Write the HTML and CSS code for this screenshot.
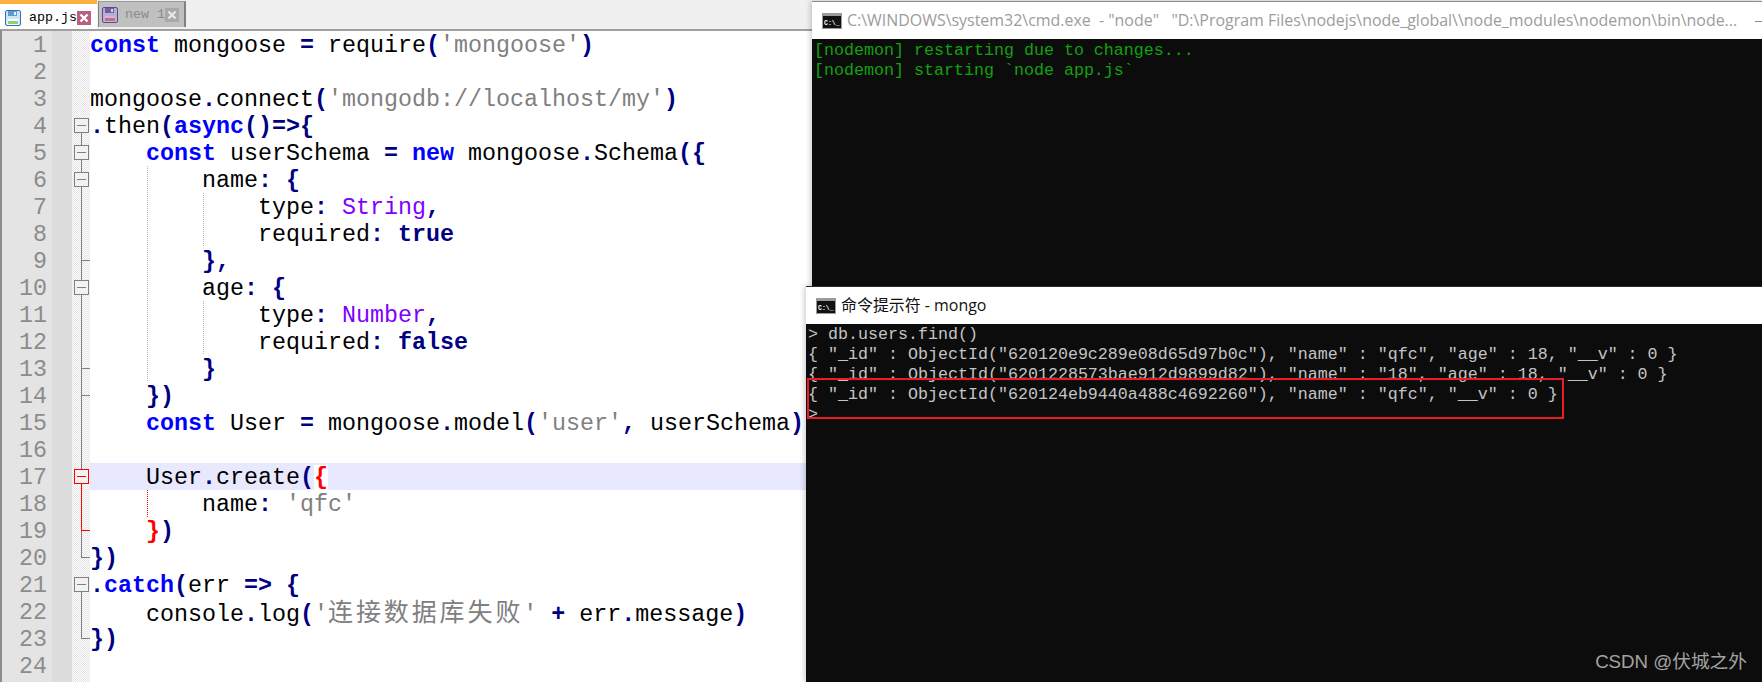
FILE: index.html
```html
<!DOCTYPE html>
<html lang="en">
<head>
<meta charset="utf-8">
<title>Editor and consoles</title>
<link rel="stylesheet" href="styles.css">
</head>
<body>
<main class="desktop">
  <section class="editor">
    <nav class="tabs">
      <div class="tab tab-active">
        <svg class="disk" viewBox="0 0 16 16" width="16" height="16"><rect x=".5" y=".5" width="15" height="15" rx="1.5" fill="#cfe3f7" stroke="#2f74b8"/><rect x="3" y="1" width="9" height="5" fill="#5d9bd8"/><rect x="9" y="2" width="2" height="3" fill="#eaf4ff"/><rect x="2.5" y="9" width="11" height="6" fill="#fff"/><rect x="3" y="11" width="10" height="3" fill="#8fd16f"/></svg>
        <span class="tab-label">app.js</span>
        <svg class="close" viewBox="0 0 14 14" width="14" height="14"><rect width="14" height="14" fill="#b9607e"/><path d="M3.5 3.5l7 7M10.500 3.500l-7 7" stroke="#fff" stroke-width="2.400"/></svg>
      </div>
      <div class="tab tab-idle">
        <svg class="disk" viewBox="0 0 16 16" width="16" height="16"><rect x=".5" y=".5" width="15" height="15" rx="1.5" fill="#b7b0cf" stroke="#5a4a8c"/><rect x="3" y="1" width="9" height="5" fill="#6f5fa0"/><rect x="9" y="2" width="2" height="3" fill="#d8d4e6"/><rect x="2.5" y="9" width="11" height="6" fill="#d8b4c4"/><rect x="3" y="11" width="10" height="3" fill="#b0729a"/></svg>
        <span class="tab-label">new 1</span>
        <svg class="close" viewBox="0 0 14 14" width="14" height="14"><rect width="14" height="14" fill="#a8a8a8"/><path d="M3.5 3.5l7 7M10.500 3.500l-7 7" stroke="#e8e8e8" stroke-width="2.400"/></svg>
      </div>
    </nav>
    <div class="pane">
      <div class="numbers">
        <div class="num">1</div><div class="num">2</div><div class="num">3</div><div class="num">4</div><div class="num">5</div><div class="num">6</div><div class="num">7</div><div class="num">8</div><div class="num">9</div><div class="num">10</div><div class="num">11</div><div class="num">12</div><div class="num">13</div><div class="num">14</div><div class="num">15</div><div class="num">16</div><div class="num">17</div><div class="num">18</div><div class="num">19</div><div class="num">20</div><div class="num">21</div><div class="num">22</div><div class="num">23</div><div class="num">24</div>
      </div>
      <div class="fold">
        <svg viewBox="0 0 18 648" width="18" height="648">
          <g fill="none" stroke="#808080" shape-rendering="crispEdges">
            <path d="M9.500 101V526.500H18"/>
            <path d="M9.500 229.500H18M9.500 337.500H18M9.500 364.500H18"/>
            <path d="M9.500 560V607.500H18"/>
            <g fill="#f2f2f2">
              <rect x="2.500" y="87.500" width="14" height="14"/>
              <rect x="2.500" y="114.500" width="14" height="14"/>
              <rect x="2.500" y="141.500" width="14" height="14"/>
              <rect x="2.500" y="249.500" width="14" height="14"/>
              <rect x="2.500" y="546.500" width="14" height="14"/>
            </g>
            <path d="M5 94.500H14M5 121.500H14M5 148.500H14M5 256.500H14M5 553.500H14"/>
          </g>
          <g fill="none" stroke="#f00" shape-rendering="crispEdges">
            <path d="M9.500 453V499.500H18"/>
            <rect x="2.500" y="438.500" width="14" height="14" fill="#f2f2f2"/>
            <path d="M5 445.500H14"/>
          </g>
        </svg>
      </div>
      <div class="code">
        <svg class="guides" viewBox="0 0 200 648" width="200" height="648">
          <g fill="none" stroke="#b4b4b4" stroke-dasharray="1 1" shape-rendering="crispEdges">
            <path d="M57.500 135V351"/>
            <path d="M113.500 162V216M113.500 270V324"/>
          </g>
          <path d="M57.500 459V486" fill="none" stroke="#f00" stroke-dasharray="1 1" shape-rendering="crispEdges"/>
        </svg>
        <div class="line"><span class="k">const</span> mongoose <span class="o">=</span> require<span class="o">(</span><span class="s">'mongoose'</span><span class="o">)</span></div>
        <div class="line"></div>
        <div class="line">mongoose<span class="o">.</span>connect<span class="o">(</span><span class="s">'mongodb://localhost/my'</span><span class="o">)</span></div>
        <div class="line"><span class="o">.</span>then<span class="o">(</span><span class="k">async</span><span class="o">()=&gt;{</span></div>
        <div class="line">    <span class="k">const</span> userSchema <span class="o">=</span> <span class="k">new</span> mongoose<span class="o">.</span>Schema<span class="o">({</span></div>
        <div class="line">        name<span class="o">:</span> <span class="o">{</span></div>
        <div class="line">            type<span class="o">:</span> <span class="t">String</span><span class="o">,</span></div>
        <div class="line">            required<span class="o">:</span> <span class="o">true</span></div>
        <div class="line">        <span class="o">},</span></div>
        <div class="line">        age<span class="o">:</span> <span class="o">{</span></div>
        <div class="line">            type<span class="o">:</span> <span class="t">Number</span><span class="o">,</span></div>
        <div class="line">            required<span class="o">:</span> <span class="o">false</span></div>
        <div class="line">        <span class="o">}</span></div>
        <div class="line">    <span class="o">})</span></div>
        <div class="line">    <span class="k">const</span> User <span class="o">=</span> mongoose<span class="o">.</span>model<span class="o">(</span><span class="s">'user'</span><span class="o">,</span> userSchema<span class="o">)</span></div>
        <div class="line"></div>
        <div class="line line-current">    User<span class="o">.</span>create<span class="o">(</span><span class="brace">{</span></div>
        <div class="line">        name<span class="o">:</span> <span class="s">'qfc'</span></div>
        <div class="line">    <span class="match">}</span><span class="o">)</span></div>
        <div class="line"><span class="o">})</span></div>
        <div class="line"><span class="o">.</span><span class="k">catch</span><span class="o">(</span>err <span class="o">=&gt;</span> <span class="o">{</span></div>
        <div class="line">    console<span class="o">.</span>log<span class="o">(</span><span class="s">'<span class="cjk">连接数据库失败</span>'</span> <span class="o">+</span> err<span class="o">.</span>message<span class="o">)</span></div>
        <div class="line"><span class="o">})</span></div>
        <div class="line"></div>
      </div>
    </div>
  </section>

  <section class="window window-node">
    <header class="titlebar">
      <svg class="cmd-icon" viewBox="0 0 20 16" width="20" height="16"><rect width="20" height="16" fill="#9a9a9a"/><rect x="1" y="3" width="18" height="12" fill="#111"/><text x="2" y="12" class="cmd-glyph">C:\_</text></svg>
      <span class="title title-idle">C:\WINDOWS\system32\cmd.exe  - "node"   "D:\Program Files\nodejs\node_global\\node_modules\nodemon\bin\node...</span>
      <span class="minimize"></span>
    </header>
    <pre class="console console-green">[nodemon] restarting due to changes...
[nodemon] starting `node app.js`</pre>
  </section>

  <section class="window window-mongo">
    <header class="titlebar">
      <svg class="cmd-icon" viewBox="0 0 20 16" width="20" height="16"><rect width="20" height="16" fill="#9a9a9a"/><rect x="1" y="3" width="18" height="12" fill="#111"/><text x="2" y="12" class="cmd-glyph">C:\_</text></svg>
      <span class="title">命令提示符 - mongo</span>
    </header>
    <pre class="console">&gt; db.users.find()
{ "_id" : ObjectId("620120e9c289e08d65d97b0c"), "name" : "qfc", "age" : 18, "__v" : 0 }
{ "_id" : ObjectId("6201228573bae912d9899d82"), "name" : "18", "age" : 18, "__v" : 0 }
{ "_id" : ObjectId("620124eb9440a488c4692260"), "name" : "qfc", "__v" : 0 }
&gt;</pre>
    <div class="callout"></div>
    <div class="watermark">CSDN @伏城之外</div>
  </section>
</main>
</body>
</html>
```
FILE: styles.css
```css
* { box-sizing: border-box; }
html, body { margin: 0; height: 100%; }
body { background: #fff; overflow: hidden; }

.desktop { position: relative; width: 1762px; height: 682px; overflow: hidden; }

.editor { display: flex; flex-direction: column; height: 682px; }

.tabs {
  display: flex;
  align-items: flex-end;
  gap: 1px;
  height: 29px;
  padding-bottom: 2px;
  background: #f0f0f0;
}
.tab { display: flex; align-items: center; position: relative; }
.tab-active {
  width: 97px;
  height: 29px;
  padding: 3px 6px 0 5px;
  background: #fff;
  border-top: 4px solid #fbb040;
  margin-bottom: -2px;
}
.tab-idle {
  width: 88px;
  height: 26px;
  padding: 0 5px 0 3px;
  background: #c0c0c0;
  border-top: 1px solid #9a9a9a;
  border-right: 2px solid #808080;
  border-left: 1px solid #808080;
}
.disk { flex: none; }
.close { flex: none; margin-left: auto; }
.tab-label {
  font: 13.330px/1 "Liberation Mono", monospace;
  margin-left: 8px;
  color: #000;
}
.tab-idle .tab-label { color: #8a8a8a; margin-left: 7px; }

.pane {
  display: flex;
  flex: 1;
  min-height: 0;
  border-top: 2px solid #a0a0a0;
  border-left: 2px solid #8c8c8c;
  background: #fff;
}
.numbers {
  flex: none;
  width: 70px;
  padding-right: 25px;
  background: linear-gradient(to right, #e4e4e4 50px, #dcdcdc 50px);
  color: #8c8c8c;
  font: 23.330px/27px "Liberation Mono", monospace;
  text-align: right;
}
.num { height: 27px; padding-top: 2px; }
.fold {
  flex: none;
  width: 18px;
  background: repeating-conic-gradient(#e2e2e2 0 25%, #fff 0 50%) 0 0 / 2px 2px;
}
.fold svg { display: block; }

.code {
  position: relative;
  flex: 1;
  min-width: 0;
  color: #000;
  font: 23.330px/27px "Liberation Mono", "Noto Sans CJK SC", monospace;
}
.guides { position: absolute; left: 0; top: 0; }
.line { height: 27px; padding-top: 2px; white-space: pre; position: relative; }
.line-current { background: #e8e8ff; }
.k { color: #0000ff; font-weight: 700; }
.o { color: #000080; font-weight: 700; }
.s { color: #808080; }
.t { color: #8000ff; }
.brace { color: #f00; font-weight: 700; background: #fff; }
.match { color: #f00; font-weight: 700; }
.cjk { font-size: 25px; line-height: 20px; letter-spacing: 2.900px; font-family: "Noto Sans CJK SC", sans-serif; }

.window {
  position: absolute;
  display: flex;
  flex-direction: column;
  background: #0c0c0c;
  box-shadow: -2px 0 5px rgba(0, 0, 0, .18);
}
.window-node { left: 812px; top: 1px; width: 950px; height: 300px; border-top: 1px solid #8c8c8c; }
.window-mongo { left: 806px; top: 286px; width: 956px; height: 396px; border-top: 1px solid #2a2a2a; }

.titlebar {
  display: flex;
  align-items: center;
  flex: none;
  height: 37px;
  padding-left: 10px;
  background: #fff;
}
.cmd-icon { flex: none; }
.cmd-glyph { font: 700 6.500px "Liberation Mono", monospace; fill: #fff; }
.title {
  margin-left: 5px;
  font: 15.950px/1 "Open Sans", "Noto Sans CJK SC", sans-serif;
  color: #111;
  white-space: pre;
}
.title-idle { color: #9c9c9c; }
.minimize { position: absolute; right: 0; top: 19px; width: 7px; height: 1px; background: #8a8a8a; }

.console {
  margin: 0;
  padding: 1px 0 0 2px;
  font: 16.670px/20px "Liberation Mono", monospace;
  color: #c4c4c4;
  white-space: pre;
}
.console-green { padding-top: 2px; color: #13a10e; }

.callout {
  position: absolute;
  left: 1px;
  top: 91px;
  width: 757px;
  height: 41px;
  border: 2px solid #ed1c24;
}
.watermark {
  position: absolute;
  right: 15px;
  bottom: 9px;
  font: 18.700px/1.200 "Liberation Sans", "Noto Sans CJK SC", sans-serif;
  color: #a3a3a3;
}
```
